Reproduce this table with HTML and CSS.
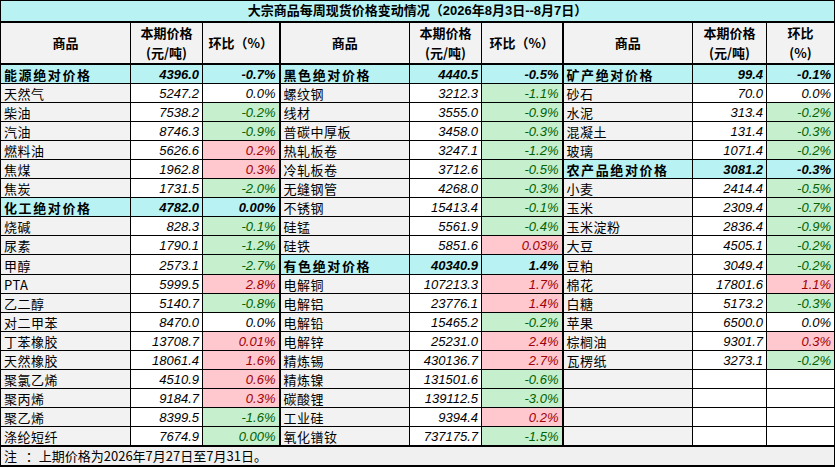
FILE: index.html
```html
<!DOCTYPE html>
<html lang="zh-CN">
<head>
<meta charset="utf-8">
<title>大宗商品每周现货价格变动情况</title>
<link rel="stylesheet" href="styles.css">
</head>
<body>
<table class="sheet">
  <colgroup>
    <col class="w-name"><col class="w-price"><col class="w-chg">
    <col class="w-name"><col class="w-price"><col class="w-chg2">
    <col class="w-name"><col class="w-price3"><col class="w-chg3">
  </colgroup>
  <tr class="title-row"><th colspan="9">大宗商品每周现货价格变动情况（2026年8月3日--8月7日）</th></tr>
  <tr class="head-row">
    <th>商品</th><th>本期价格<br>(元/吨)</th><th>环比（%）</th>
    <th class="s">商品</th><th>本期价格<br>(元/吨)</th><th>环比（%）</th>
    <th class="s">商品</th><th>本期价格<br>(元/吨)</th><th>环比<br>(%)</th>
  </tr>
  <tr>
    <td class="kn">能源绝对价格</td><td class="kp">4396.0</td><td class="kc">-0.7%</td>
    <td class="kn s">黑色绝对价格</td><td class="kp">4440.5</td><td class="kc">-0.5%</td>
    <td class="kn s">矿产绝对价格</td><td class="kp">99.4</td><td class="kc">-0.1%</td>
  </tr>
  <tr>
    <td class="n">天然气</td><td class="p">5247.2</td><td class="c">0.0%</td>
    <td class="n s">螺纹钢</td><td class="p">3212.3</td><td class="c g">-1.1%</td>
    <td class="n s">砂石</td><td class="p">70.0</td><td class="c">0.0%</td>
  </tr>
  <tr>
    <td class="n">柴油</td><td class="p">7538.2</td><td class="c g">-0.2%</td>
    <td class="n s">线材</td><td class="p">3555.0</td><td class="c g">-0.9%</td>
    <td class="n s">水泥</td><td class="p">313.4</td><td class="c g">-0.2%</td>
  </tr>
  <tr>
    <td class="n">汽油</td><td class="p">8746.3</td><td class="c g">-0.9%</td>
    <td class="n s">普碳中厚板</td><td class="p">3458.0</td><td class="c g">-0.3%</td>
    <td class="n s">混凝土</td><td class="p">131.4</td><td class="c g">-0.3%</td>
  </tr>
  <tr>
    <td class="n">燃料油</td><td class="p">5626.6</td><td class="c r">0.2%</td>
    <td class="n s">热轧板卷</td><td class="p">3247.1</td><td class="c g">-1.2%</td>
    <td class="n s">玻璃</td><td class="p">1071.4</td><td class="c g">-0.2%</td>
  </tr>
  <tr>
    <td class="n">焦煤</td><td class="p">1962.8</td><td class="c r">0.3%</td>
    <td class="n s">冷轧板卷</td><td class="p">3712.6</td><td class="c g">-0.5%</td>
    <td class="kn s">农产品绝对价格</td><td class="kp">3081.2</td><td class="kc">-0.3%</td>
  </tr>
  <tr>
    <td class="n">焦炭</td><td class="p">1731.5</td><td class="c g">-2.0%</td>
    <td class="n s">无缝钢管</td><td class="p">4268.0</td><td class="c g">-0.3%</td>
    <td class="n s">小麦</td><td class="p">2414.4</td><td class="c g">-0.5%</td>
  </tr>
  <tr>
    <td class="kn">化工绝对价格</td><td class="kp">4782.0</td><td class="kc">0.00%</td>
    <td class="n s">不锈钢</td><td class="p">15413.4</td><td class="c g">-0.1%</td>
    <td class="n s">玉米</td><td class="p">2309.4</td><td class="c g">-0.7%</td>
  </tr>
  <tr>
    <td class="n">烧碱</td><td class="p">828.3</td><td class="c g">-0.1%</td>
    <td class="n s">硅锰</td><td class="p">5561.9</td><td class="c g">-0.4%</td>
    <td class="n s">玉米淀粉</td><td class="p">2836.4</td><td class="c g">-0.9%</td>
  </tr>
  <tr>
    <td class="n">尿素</td><td class="p">1790.1</td><td class="c g">-1.2%</td>
    <td class="n s">硅铁</td><td class="p">5851.6</td><td class="c r">0.03%</td>
    <td class="n s">大豆</td><td class="p">4505.1</td><td class="c g">-0.2%</td>
  </tr>
  <tr>
    <td class="n">甲醇</td><td class="p">2573.1</td><td class="c g">-2.7%</td>
    <td class="kn s">有色绝对价格</td><td class="kp">40340.9</td><td class="kc">1.4%</td>
    <td class="n s">豆粕</td><td class="p">3049.4</td><td class="c g">-0.2%</td>
  </tr>
  <tr>
    <td class="n">PTA</td><td class="p">5999.5</td><td class="c r">2.8%</td>
    <td class="n s">电解铜</td><td class="p">107213.3</td><td class="c r">1.7%</td>
    <td class="n s">棉花</td><td class="p">17801.6</td><td class="c r">1.1%</td>
  </tr>
  <tr>
    <td class="n">乙二醇</td><td class="p">5140.7</td><td class="c g">-0.8%</td>
    <td class="n s">电解铝</td><td class="p">23776.1</td><td class="c r">1.4%</td>
    <td class="n s">白糖</td><td class="p">5173.2</td><td class="c g">-0.3%</td>
  </tr>
  <tr>
    <td class="n">对二甲苯</td><td class="p">8470.0</td><td class="c">0.0%</td>
    <td class="n s">电解铅</td><td class="p">15465.2</td><td class="c g">-0.2%</td>
    <td class="n s">苹果</td><td class="p">6500.0</td><td class="c">0.0%</td>
  </tr>
  <tr>
    <td class="n">丁苯橡胶</td><td class="p">13708.7</td><td class="c r">0.01%</td>
    <td class="n s">电解锌</td><td class="p">25231.0</td><td class="c r">2.4%</td>
    <td class="n s">棕榈油</td><td class="p">9301.7</td><td class="c r">0.3%</td>
  </tr>
  <tr>
    <td class="n">天然橡胶</td><td class="p">18061.4</td><td class="c r">1.6%</td>
    <td class="n s">精炼锡</td><td class="p">430136.7</td><td class="c r">2.7%</td>
    <td class="n s">瓦楞纸</td><td class="p">3273.1</td><td class="c g">-0.2%</td>
  </tr>
  <tr>
    <td class="n">聚氯乙烯</td><td class="p">4510.9</td><td class="c r">0.6%</td>
    <td class="n s">精炼镍</td><td class="p">131501.6</td><td class="c g">-0.6%</td>
    <td class="n s"></td><td class="p"></td><td class="c"></td>
  </tr>
  <tr>
    <td class="n">聚丙烯</td><td class="p">9184.7</td><td class="c r">0.3%</td>
    <td class="n s">碳酸锂</td><td class="p">139112.5</td><td class="c g">-3.0%</td>
    <td class="n s"></td><td class="p"></td><td class="c"></td>
  </tr>
  <tr>
    <td class="n">聚乙烯</td><td class="p">8399.5</td><td class="c g">-1.6%</td>
    <td class="n s">工业硅</td><td class="p">9394.4</td><td class="c r">0.2%</td>
    <td class="n s"></td><td class="p"></td><td class="c"></td>
  </tr>
  <tr class="last-row">
    <td class="n">涤纶短纤</td><td class="p">7674.9</td><td class="c g">0.00%</td>
    <td class="n s">氧化镨钕</td><td class="p">737175.7</td><td class="c g">-1.5%</td>
    <td class="n s"></td><td class="p"></td><td class="c"></td>
  </tr>
  <tr class="note-row"><td colspan="9">注&nbsp;&nbsp;&nbsp;：上期价格为2026年7月27日至7月31日。</td></tr>
</table>
</body>
</html>
```

FILE: styles.css
```css
body {
  margin: 0;
  background: #ffffff;
}

.sheet {
  border-collapse: collapse;
  table-layout: fixed;
  width: 834px;
  font-family: "Liberation Sans", "Noto Sans CJK SC", sans-serif;
  font-size: 13px;
  color: #000000;
}

.w-name { width: 130px; }
.w-price { width: 72px; }
.w-chg { width: 77px; }
.w-chg2 { width: 81px; }
.w-price3 { width: 74px; }
.w-chg3 { width: 68px; }

.sheet th,
.sheet td {
  border: 1px solid #000000;
  padding: 0 3px;
  white-space: nowrap;
  overflow: hidden;
}

.sheet tr { height: 19.1px; }

.sheet td {
  vertical-align: bottom;
  line-height: 16px;
}

.title-row { height: 23px; }
.title-row th {
  background: #b8f2f2;
  font-weight: bold;
  text-align: center;
  line-height: 20px;
  padding: 0;
  border-bottom: 2px solid #000000;
}

.head-row { height: 40px; }
.head-row th {
  background: #f2f2f2;
  font-family: "Noto Sans CJK SC", sans-serif;
  font-weight: bold;
  text-align: center;
  vertical-align: middle;
  line-height: 20px;
  border-bottom: 2px solid #000000;
}

.s { border-left: 2px solid #000000 !important; }

.n {
  background: #f2f2f2;
  font-family: "Noto Sans CJK SC", sans-serif;
  letter-spacing: 0.5px;
  text-align: left;
}

.p {
  background: #ffffff;
  font-style: italic;
  text-align: right;
}

.c {
  background: #ffffff;
  font-style: italic;
  text-align: right;
}

.c.g { background: #c6efce; color: #006100; }
.c.r { background: #ffc7ce; color: #9c0006; }

.kn,
.kp,
.kc {
  background: #b8f2f2;
  font-weight: bold;
}

.kn {
  font-family: "Noto Sans CJK SC", sans-serif;
  letter-spacing: 1.6px;
  text-align: left;
}

.kp,
.kc {
  font-style: italic;
  text-align: right;
}

.last-row td { border-bottom: 2px solid #000000; }

.note-row { height: 21px; }
.note-row td {
  background: #f0f0f0;
  font-family: "Noto Sans CJK SC", sans-serif;
  text-align: left;
  vertical-align: middle;
  line-height: 18px;
  border-bottom: 2px solid #000000;
}
```
